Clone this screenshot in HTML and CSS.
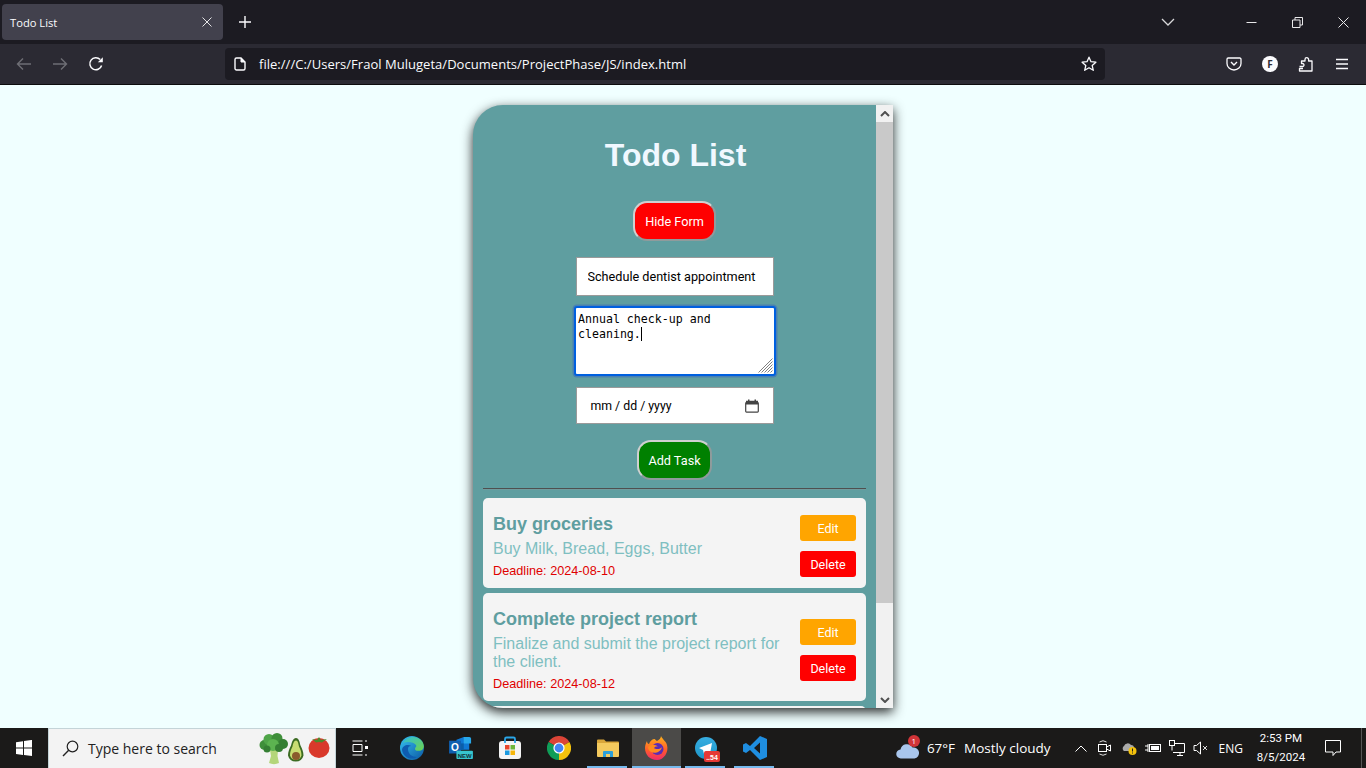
FILE: index.html
```html
<!DOCTYPE html>
<html lang="en">
<head>
  <meta charset="UTF-8">
  <meta name="viewport" content="width=device-width, initial-scale=1.0">
  <title>Todo List</title>
  <link rel="stylesheet" href="styles.css">
</head>
<body>
  <!-- browser tabs -->
  <div class="tabbar">
    <div class="tab">
      <span class="tab-title">Todo List</span>
      <svg class="tab-close" width="10" height="10" viewBox="0 0 10 10"><path d="M.5.5l9 9M9.500.5l-9 9" stroke="#e4e4e6" fill="none"/></svg>
    </div>
    <svg class="new-tab" width="14" height="14" viewBox="0 0 14 14"><path d="M7 1v12M1 7h12" stroke="#fbfbfe" stroke-width="1.400" fill="none"/></svg>
    <svg class="tab-list" width="14" height="8" viewBox="0 0 14 8"><path d="M1 1l6 6 6-6" stroke="#d8d8da" stroke-width="1.300" fill="none"/></svg>
    <div class="win-btn"><svg width="11" height="11" viewBox="0 0 11 11"><path d="M.5 5.500h10" stroke="#e8e8ea" fill="none"/></svg></div>
    <div class="win-btn"><svg width="11" height="11" viewBox="0 0 11 11"><path d="M.5 3h7.500v7.500H.5zM3 3V.5h7.500V8H8" stroke="#e8e8ea" fill="none"/></svg></div>
    <div class="win-btn"><svg width="11" height="11" viewBox="0 0 11 11"><path d="M.5.5l10 10M10.500.5l-10 10" stroke="#e8e8ea" fill="none"/></svg></div>
  </div>

  <!-- browser toolbar -->
  <div class="toolbar">
    <div class="tool-btn"><svg width="16" height="14" viewBox="0 0 16 14"><path d="M15 7H1.500M7 1.500L1.500 7 7 12.500" stroke="#6e6e75" stroke-width="1.400" fill="none"/></svg></div>
    <div class="tool-btn"><svg width="16" height="14" viewBox="0 0 16 14"><path d="M1 7h13.500M9 1.500L14.500 7 9 12.500" stroke="#6e6e75" stroke-width="1.400" fill="none"/></svg></div>
    <div class="tool-btn"><svg width="16" height="16" viewBox="0 0 16 16"><path d="M13.600 9.500A6 6 0 1 1 12.200 3.600" stroke="#fbfbfe" stroke-width="1.500" fill="none"/><path d="M14.800 1.200v5h-5z" fill="#fbfbfe"/></svg></div>
    <div class="urlbar">
      <svg width="12" height="14" viewBox="0 0 12 14"><path d="M1 2.500A1.500 1.500 0 0 1 2.500 1H7l4 4v6.500A1.500 1.500 0 0 1 9.500 13h-7A1.500 1.500 0 0 1 1 11.500z" stroke="#fbfbfe" stroke-width="1.400" fill="none"/><path d="M7 1v4h4" fill="#fbfbfe" stroke="#fbfbfe"/></svg>
      <span class="url-text">file:///C:/Users/Fraol Mulugeta/Documents/ProjectPhase/JS/index.html</span>
      <svg class="url-star" width="16" height="16" viewBox="0 0 16 16"><path d="M8 1.200l2 4.500 4.900.5-3.700 3.300 1.100 4.800L8 11.800l-4.300 2.500 1.100-4.800L1.100 6.200 6 5.700z" stroke="#fbfbfe" stroke-width="1.300" stroke-linejoin="round" fill="none"/></svg>
    </div>
    <div class="tool-btn"><svg width="16" height="14" viewBox="0 0 16 14"><path d="M1 2.200A1.200 1.200 0 0 1 2.200 1h11.600A1.200 1.200 0 0 1 15 2.200V6.500a7 6.500 0 0 1-14 0z" stroke="#fbfbfe" stroke-width="1.300" fill="none"/><path d="M5 5l3 3 3-3" stroke="#fbfbfe" stroke-width="1.400" fill="none"/></svg></div>
    <div class="tool-btn"><span class="avatar">F</span></div>
    <div class="tool-btn"><svg width="16" height="16" viewBox="0 0 16 16"><path d="M1.500 10.500h3a1.500 1.500 0 0 0 0-3h-1V5h3.500V3.500a1.800 1.800 0 0 1 3.600 0V5H14v10H1.500v-2.500H5" stroke="#fbfbfe" stroke-width="1.300" stroke-linejoin="round" fill="none"/></svg></div>
    <div class="tool-btn"><svg width="14" height="12" viewBox="0 0 14 12"><path d="M1 1.500h12M1 6h12M1 10.500h12" stroke="#fbfbfe" stroke-width="1.300" fill="none"/></svg></div>
  </div>

  <!-- the page itself -->
  <main class="page">
    <section class="panel">
      <div class="panel-body">
        <h1>Todo List</h1>
        <button class="pill-btn btn-hide" type="button">Hide Form</button>
        <input class="field field-title" type="text" value="Schedule dentist appointment">
        <div class="field-area">Annual check-up and cleaning.<span class="caret"></span>
          <svg class="grip" width="15" height="15" viewBox="0 0 15 15"><path d="M14.500.5L.5 14.500M14.500 3.500L3.500 14.500M14.500 6.500L6.500 14.500M14.500 9.500L9.500 14.500M14.500 12.500L12.500 14.500" stroke="#808080" fill="none"/></svg>
        </div>
        <div class="field field-date">
          <span>mm / dd / yyyy</span>
          <svg width="14" height="14" viewBox="0 0 14 14"><path d="M1.500 3.500h11a.8.8 0 0 1 .8.8v8a.8.8 0 0 1-.8.8h-11a.8.8 0 0 1-.8-.8v-8a.8.8 0 0 1 .8-.8z" fill="none" stroke="#444" stroke-width="1.200"/><path d="M1 1.800h12v3.700H1zM3 .5h1.500v2H3zM9.500.5H11v2H9.500z" fill="#444"/></svg>
        </div>
        <button class="pill-btn btn-add" type="button">Add Task</button>
        <hr class="divider">
        <ul class="task-list">
          <li class="task-item">
            <div class="task-text">
              <h3>Buy groceries</h3>
              <p class="task-desc">Buy Milk, Bread, Eggs, Butter</p>
              <p class="task-deadline">Deadline: 2024-08-10</p>
            </div>
            <div class="task-actions">
              <button class="task-btn btn-edit" type="button">Edit</button>
              <button class="task-btn btn-delete" type="button">Delete</button>
            </div>
          </li>
          <li class="task-item">
            <div class="task-text">
              <h3>Complete project report</h3>
              <p class="task-desc">Finalize and submit the project report for the client.</p>
              <p class="task-deadline">Deadline: 2024-08-12</p>
            </div>
            <div class="task-actions">
              <button class="task-btn btn-edit" type="button">Edit</button>
              <button class="task-btn btn-delete" type="button">Delete</button>
            </div>
          </li>
          <li class="task-item task-next"></li>
        </ul>
      </div>
      <div class="scrollbar">
        <div class="scroll-arrow"><svg width="10" height="6" viewBox="0 0 10 6"><path d="M1 5l4-4 4 4" stroke="#505050" stroke-width="2" fill="none"/></svg></div>
        <div class="scroll-thumb"></div>
        <div class="scroll-rest"></div>
        <div class="scroll-arrow"><svg width="10" height="6" viewBox="0 0 10 6"><path d="M1 1l4 4 4-4" stroke="#505050" stroke-width="2" fill="none"/></svg></div>
      </div>
    </section>
  </main>

  <!-- windows taskbar -->
  <footer class="taskbar">
    <div class="start"><svg width="16" height="16" viewBox="0 0 16 16"><path d="M0 2.200l7-1v6.400H0zM8 1l8-1.100v7.700H8zM0 8.500h7v6.400l-7-1zM8 8.500h8V16l-8-1.100z" fill="#fff"/></svg></div>
    <div class="search">
      <svg width="17" height="17" viewBox="0 0 17 17"><circle cx="10.500" cy="6.500" r="5.300" fill="none" stroke="#222" stroke-width="1.200"/><path d="M6.700 10.300L1 16" stroke="#222" stroke-width="1.400"/></svg>
      <span class="search-text">Type here to search</span>
      <svg class="search-art" width="72" height="32" viewBox="0 0 72 32">
        <path d="M11 17h8l-.5 6 1.500 7c-3 1.500-7 1.500-10 0l2-7z" fill="#b4d67a"/>
        <circle cx="5.500" cy="12" r="5" fill="#3f8f3a"/><circle cx="10" cy="6.500" r="5.500" fill="#4fa548"/><circle cx="18" cy="5.500" r="5.500" fill="#3f8f3a"/><circle cx="24" cy="11" r="5" fill="#357f33"/><circle cx="14" cy="12" r="6" fill="#5cb350"/><circle cx="20" cy="15" r="4" fill="#357f33"/><circle cx="8" cy="16" r="3.500" fill="#357f33"/>
        <path d="M37 5c3 0 3.500 4 4.500 7.500 1.500 3 3 6 3 10a8 8 0 0 1-15.500 0c0-4 1.500-7 3-10C33 9 34 5 37 5z" fill="#3c6b22"/>
        <path d="M37 7.500c2 0 2.500 3.500 3 6 1.500 3 2.500 5.500 2.500 9a6 6 0 0 1-11.500 0c0-3.500 1-6 2.500-9 .5-2.500 1.500-6 3.500-6z" fill="#c9dc72"/>
        <circle cx="37" cy="23" r="4" fill="#8a5a2c"/>
        <ellipse cx="60" cy="15" rx="10.500" ry="10" fill="#d9392b"/><path d="M53 6l5 1 2-3 2 3 6-1-5 3.500-3-.5-3 .5z" fill="#4d8a2c"/>
      </svg>
    </div>
    <div class="task-view"><svg width="16" height="16" viewBox="0 0 16 16"><path d="M.5 1h10M.5 15h10M1 4.500h9v7H1z" stroke="#fff" fill="none"/><path d="M13 1h2M13 15h2" stroke="#fff"/><rect x="13" y="6" width="3" height="3" fill="#fff"/></svg></div>

    <div class="apps">
      <div class="app">
        <svg width="24" height="24" viewBox="0 0 24 24"><defs><linearGradient id="edgeA" x1="0" y1="0" x2="1" y2="1"><stop offset="0" stop-color="#35c1f1"/><stop offset="1" stop-color="#0c59a4"/></linearGradient><linearGradient id="edgeB" x1="0" y1="0" x2="1" y2="1"><stop offset="0" stop-color="#2fbfd8"/><stop offset="1" stop-color="#6fd34a"/></linearGradient></defs><circle cx="12" cy="12" r="12" fill="url(#edgeA)"/><path d="M3 7C6 0 16-1 21 4c3 3 4 8 1 10-3 1.500-7 1-7-1 0-2 2-2 1-4-2-3-9-4-13-2z" fill="url(#edgeB)"/><path d="M8 13c0 5 4 8 9 8-6 4-14 0-15-7 0-3 3-5 6-5 2 0 3 1 3 1-2 0-3 1-3 3z" fill="#0e5cb0"/></svg>
      </div>
      <div class="app">
        <svg width="24" height="22" viewBox="0 0 26 24"><path d="M8 3l8-3h6v14H8z" fill="#0f78d4"/><path d="M16 0h6a2 2 0 0 1 2 2v5h-8z" fill="#28a8ea"/><path d="M8 7h8v7H8z" fill="#0a5ea8"/><rect x="0" y="4" width="13" height="14" fill="#0f5fb0"/><text class="app-letter" x="6.500" y="15">O</text><rect x="8" y="15" width="18" height="9" rx="1" fill="#37c6d0"/><text class="app-new" x="17" y="22.500">NEW</text></svg>
      </div>
      <div class="app">
        <svg width="24" height="24" viewBox="0 0 24 24"><rect x="1" y="5" width="22" height="18" rx="3" fill="#f4f4f4"/><path d="M7 7V3a1.500 1.500 0 0 1 1.500-1.500h7A1.500 1.500 0 0 1 17 3v4" stroke="#2aa6e8" stroke-width="1.800" fill="none"/><rect x="7" y="9" width="4.500" height="4.500" fill="#e8462a"/><rect x="12.500" y="9" width="4.500" height="4.500" fill="#6db63a"/><rect x="7" y="14.500" width="4.500" height="4.500" fill="#1b9ae0"/><rect x="12.500" y="14.500" width="4.500" height="4.500" fill="#f7b70b"/></svg>
      </div>
      <div class="app">
        <svg width="24" height="24" viewBox="0 0 24 24"><path d="M12 12L1.600 6A12 12 0 0 1 22.400 6z" fill="#db4437"/><path d="M12 12L22.400 6A12 12 0 0 1 12 24z" fill="#f4c20d"/><path d="M12 12L12 24A12 12 0 0 1 1.600 6z" fill="#0f9d58"/><circle cx="12" cy="12" r="5.600" fill="#fff"/><circle cx="12" cy="12" r="4.400" fill="#4285f4"/></svg>
      </div>
      <div class="app app-open">
        <svg width="22" height="20" viewBox="0 0 22 20"><path d="M0 2.500A1 1 0 0 1 1 1.500h6l2 2h12a1 1 0 0 1 1 1V6H0z" fill="#d9a63a"/><path d="M0 5h22v13a1 1 0 0 1-1 1H1a1 1 0 0 1-1-1z" fill="#f4ca5e"/><path d="M6 19v-5a1 1 0 0 1 1-1h8a1 1 0 0 1 1 1v5h-3v-3H9v3z" fill="#2d9fd8"/></svg>
      </div>
      <div class="app app-open app-active">
        <svg width="24" height="24" viewBox="0 0 24 24"><defs><linearGradient id="foxA" x1="0" y1="0" x2="0" y2="1"><stop offset="0" stop-color="#ffb31a"/><stop offset=".6" stop-color="#ff5a2c"/><stop offset="1" stop-color="#ee2b6c"/></linearGradient></defs><path d="M16 0c1 3 5 5 6 9 2 7-3 15-10 15S0 19 0 12c0-3 1-5 2-7 0 2 1 3 2 3 1-3 3-5 6-5 0 1 1 1 2 2 2-1 4-3 4-5z" fill="url(#foxA)"/><circle cx="12.500" cy="13" r="6" fill="#5b2bb5"/><path d="M3 11c3-3 8-3 10 0-2-1-3 0-4 1 2 2 7 1 8-1-1 5-7 7-11 5-2-1-3-3-3-5z" fill="#ff8a1f"/></svg>
      </div>
      <div class="app app-open">
        <svg class="app-overhang" width="22" height="22" viewBox="0 0 22 22"><defs><linearGradient id="tgA" x1="0" y1="0" x2="0" y2="1"><stop offset="0" stop-color="#37aee2"/><stop offset="1" stop-color="#1e96c8"/></linearGradient></defs><circle cx="11" cy="11" r="11" fill="url(#tgA)"/><path d="M4 11l13-5-2 11-4-3-2 3-1-4z" fill="#fff"/><rect x="9" y="14" width="16" height="11" rx="2" fill="#e53935"/><text class="app-badge" x="17" y="22.500">..54</text></svg>
      </div>
      <div class="app app-open">
        <svg width="24" height="24" viewBox="0 0 24 24"><path d="M17 0l7 3v18l-7 3-10-10-4 3-3-1.500V8.500L3 7l4 3zM17 6.500L11 12l6 5.500z" fill="#1f8ee0"/></svg>
      </div>
    </div>

    <div class="tray">
      <div class="weather">
        <span class="weather-icon"><svg width="24" height="17" viewBox="0 0 24 17"><path d="M5 16.500a4.500 4.500 0 0 1-.5-9 6.500 6.500 0 0 1 12-2 5.500 5.500 0 0 1 2 11z" fill="#a9c6ec"/></svg><span class="weather-badge">1</span></span>
        <span>67°F</span>
        <span>Mostly cloudy</span>
      </div>
      <svg class="tray-chevron" width="12" height="7" viewBox="0 0 12 7"><path d="M.5 6.500L6 1l5.500 5.500" stroke="#fff" fill="none"/></svg>
      <svg class="tray-icon" width="16" height="16" viewBox="0 0 16 16"><path d="M2.500 2a6 6 0 0 1 7 0M2.500 14a6 6 0 0 0 7 0" stroke="#ddd" fill="none"/><rect x="1.500" y="4.500" width="8" height="7" fill="none" stroke="#fff"/><path d="M9.500 7l4-2v6l-4-2" stroke="#fff" fill="none"/></svg>
      <svg class="tray-icon" width="16" height="16" viewBox="0 0 16 16"><path d="M3 11a3 3 0 0 1 0-5 4 4 0 0 1 7-1 3 3 0 0 1 3 3v3z" fill="#aaa"/><circle cx="11.500" cy="11" r="4" fill="#f4c20d"/><path d="M11.500 8.500v3M11.500 12.500v1" stroke="#222"/></svg>
      <svg class="tray-icon" width="16" height="16" viewBox="0 0 16 16"><rect x="4.500" y="4.500" width="11" height="7" fill="none" stroke="#fff"/><rect x="6" y="6" width="8" height="4" fill="#fff"/><path d="M0 6h3M0 10h3M3 4v8" stroke="#fff"/></svg>
      <svg class="tray-icon" width="16" height="16" viewBox="0 0 16 16"><path d="M4 3.500h11.500v9H4M8 15.500h6M11 12.500v3" stroke="#fff" fill="none"/><rect x=".5" y=".5" width="5" height="5" fill="#1a1a1a" stroke="#fff"/><path d="M3 5.500v5" stroke="#fff"/></svg>
      <svg class="tray-icon" width="16" height="16" viewBox="0 0 16 16"><path d="M1 5.500h2.500L7.500 2v12l-4-3.500H1z" stroke="#fff" fill="none"/><path d="M10 6l4 4M14 6l-4 4" stroke="#ddd" fill="none"/></svg>
      <span class="tray-lang">ENG</span>
      <div class="clock"><span>2:53 PM</span><span>8/5/2024</span></div>
      <div class="notify"><svg width="16" height="16" viewBox="0 0 16 16"><path d="M.5.5h15v11.500H11l-3 3.500v-3.500H.5z" stroke="#fff" fill="none"/></svg></div>
      <div class="show-desktop"></div>
    </div>
  </footer>
</body>
</html>
```

FILE: styles.css
```css
* {
  margin: 0;
  padding: 0;
  box-sizing: border-box;
}

html, body {
  height: 100%;
}

body {
  height: 768px;
  overflow: hidden;
  display: flex;
  flex-direction: column;
  background: #f0ffff;
  font-family: "Open Sans", "Noto Sans", sans-serif;
}

/* browser chrome */
.tabbar {
  height: 44px;
  background: #1c1b22;
  display: flex;
  align-items: center;
  flex-shrink: 0;
}

.tab {
  width: 221px;
  height: 36px;
  margin-left: 2px;
  padding: 0 11px 0 8px;
  background: #42414d;
  border-radius: 4px;
  display: flex;
  align-items: center;
  justify-content: space-between;
}

.tab-title {
  font-size: 11.200px;
  color: #fbfbfe;
}

.new-tab {
  margin-left: 15px;
}

.tab-list {
  margin-left: auto;
  margin-right: 53px;
}

.win-btn {
  width: 46px;
  height: 44px;
  display: flex;
  align-items: center;
  justify-content: center;
}

.toolbar {
  height: 41px;
  padding: 0 6px;
  background: #2b2a33;
  border-bottom: 1px solid #0c0c0d;
  display: flex;
  align-items: flex-start;
  flex-shrink: 0;
}

.tool-btn {
  width: 36px;
  height: 40px;
  display: flex;
  align-items: center;
  justify-content: center;
}

.urlbar {
  flex: 1;
  height: 32px;
  margin: 4px 111px 0;
  padding: 0 8px 0 9px;
  background: #1c1b22;
  border-radius: 4px;
  display: flex;
  align-items: center;
  color: #fbfbfe;
}

.url-text {
  margin-left: 13px;
  font-size: 13px;
  letter-spacing: 0.03px;
}

.url-star {
  margin-left: auto;
}

.avatar {
  width: 16px;
  height: 16px;
  border-radius: 50%;
  background: #fbfbfe;
  color: #2b2a33;
  font-size: 10px;
  font-weight: 700;
  display: flex;
  align-items: center;
  justify-content: center;
}

/* todo page */
.page {
  flex: 1;
  display: flex;
  justify-content: center;
  align-items: flex-start;
  padding-top: 20px;
  background: #f0ffff;
}

.panel {
  width: 420px;
  height: 603px;
  display: flex;
  background: #5f9ea0;
  border-radius: 30px 0 0 30px;
  box-shadow: 0 4px 12px rgba(0, 0, 0, 0.85);
  overflow: hidden;
}

.panel-body {
  flex: 1;
  min-width: 0;
  padding: 32px 10px 0;
  display: flex;
  flex-direction: column;
  align-items: center;
  overflow: hidden;
}

.panel-body > * {
  flex-shrink: 0;
}

h1 {
  font-family: "Liberation Sans", Arial, sans-serif;
  font-size: 32px;
  font-weight: 700;
  line-height: 37px;
  color: #f0f8ff;
  margin-bottom: 27px;
  margin-left: 2px;
}

.pill-btn {
  height: 40px;
  border: 2px solid;
  border-color: #d0d0d0 #8f9b9c #8f9b9c #d0d0d0;
  border-radius: 14px;
  color: #fff;
  font-family: Roboto, sans-serif;
  font-size: 12.700px;
  white-space: nowrap;
}

.btn-hide {
  width: 83px;
  background: #f00;
  margin-bottom: 16px;
}

.field {
  width: 198px;
  background: #fff;
  border: 1px solid #9a9a9a;
  color: #000;
  font-family: Roboto, sans-serif;
  font-size: 12.650px;
}

.field-title {
  height: 39px;
  padding: 0 11px;
  margin-bottom: 10px;
  outline: none;
}

.field-area {
  position: relative;
  width: 202px;
  height: 70px;
  margin-bottom: 11px;
  padding: 4px 2.500px;
  background: #fff;
  border: 2px solid #0060df;
  border-radius: 3px;
  box-shadow: 0 0 0 1.500px #4a80b0;
  font-family: "DejaVu Sans Mono", monospace;
  font-size: 11.600px;
  line-height: 15px;
  color: #000;
}

.caret {
  display: inline-block;
  width: 1px;
  height: 14px;
  background: #000;
  vertical-align: text-bottom;
}

.grip {
  position: absolute;
  right: 1px;
  bottom: 1px;
}

.field-date {
  height: 37px;
  padding: 0 14px;
  margin-bottom: 16px;
  font-size: 12.300px;
  display: flex;
  align-items: center;
  justify-content: space-between;
}

.btn-add {
  width: 75px;
  background: #008000;
  margin-bottom: 8px;
}

.divider {
  width: 383px;
  height: 2px;
  border: 0;
  border-top: 1px solid #4f4f4f;
  border-bottom: 1px solid #6f9c9e;
  margin-bottom: 8px;
}

.task-list {
  list-style: none;
  width: 383px;
  display: flex;
  flex-direction: column;
  gap: 5px;
}

.task-item {
  display: flex;
  align-items: center;
  gap: 10px;
  padding: 0 10px;
  background: #f4f4f4;
  border-radius: 5px;
  flex-shrink: 0;
}

.task-next {
  height: 60px;
}

.task-text {
  flex: 1;
  padding: 16px 0 9px;
  font-family: "Liberation Sans", Arial, sans-serif;
}

.task-text h3 {
  font-size: 18px;
  line-height: 21px;
  color: #5f9ea0;
  margin-bottom: 5px;
}

.task-desc {
  font-size: 16px;
  line-height: 18px;
  color: #7fbfc1;
  margin-bottom: 6px;
}

.task-deadline {
  font-size: 12.700px;
  line-height: 15px;
  color: #e00000;
}

.task-actions {
  padding-top: 6px;
  display: flex;
  flex-direction: column;
  gap: 10px;
  flex-shrink: 0;
}

.task-btn {
  width: 56px;
  height: 26px;
  border: 0;
  border-radius: 3px;
  color: #fff;
  font-family: Roboto, sans-serif;
  font-size: 12.500px;
}

.btn-edit {
  background: #ffa500;
}

.btn-delete {
  background: #f00;
}

/* drawn so it looks the same on every machine */
.scrollbar {
  width: 17px;
  flex-shrink: 0;
  display: flex;
  flex-direction: column;
  background: #f1f1f1;
}

.scroll-arrow {
  height: 17px;
  display: flex;
  align-items: center;
  justify-content: center;
  flex-shrink: 0;
}

.scroll-thumb {
  height: 481px;
  background: #c9c9c9;
}

.scroll-rest {
  flex: 1;
}

/* windows taskbar */
.taskbar {
  height: 40px;
  flex-shrink: 0;
  background: #1b1a19;
  display: flex;
  align-items: stretch;
  color: #fff;
}

.start {
  width: 48px;
  display: flex;
  align-items: center;
  justify-content: center;
}

.search {
  width: 288px;
  padding: 0 4px 0 13px;
  background: #f3f3f3;
  border: 1px solid #c4d4d8;
  border-bottom: 0;
  display: flex;
  align-items: center;
}

.search-text {
  margin-left: 9px;
  font-size: 14px;
  color: #222;
}

.search-art {
  margin-left: auto;
}

.task-view {
  width: 48px;
  display: flex;
  align-items: center;
  justify-content: center;
}

.apps {
  margin-left: 3px;
  display: flex;
}

.app {
  position: relative;
  width: 49px;
  display: flex;
  align-items: center;
  justify-content: center;
}

.app-open::after {
  content: "";
  position: absolute;
  left: 4px;
  right: 5px;
  bottom: 0;
  height: 2px;
  background: #76b9ed;
}

.app-active {
  background: #4b4a48;
}

.app-active::after {
  left: 0;
  right: 0;
}

.app-overhang {
  overflow: visible;
}

.app-letter {
  font: 700 11px "Liberation Sans", sans-serif;
  fill: #fff;
  text-anchor: middle;
}

.app-new {
  font: 700 6.500px "Liberation Sans", sans-serif;
  fill: #10323a;
  text-anchor: middle;
}

.app-badge {
  font: 700 7px "Liberation Sans", sans-serif;
  fill: #fff;
  text-anchor: middle;
}

.tray {
  margin-left: auto;
  display: flex;
  align-items: center;
  font-size: 13.500px;
}

.weather {
  display: flex;
  align-items: center;
  gap: 9px;
  margin-right: 24px;
}

.weather-icon {
  position: relative;
  display: flex;
  margin-top: 4px;
  margin-right: -2px;
}

.weather-badge {
  position: absolute;
  top: -7px;
  right: 0;
  width: 12px;
  height: 12px;
  border-radius: 50%;
  background: #d13438;
  font-size: 8px;
  line-height: 12px;
  text-align: center;
}

.tray-chevron {
  margin-right: 6px;
}

.tray-icon {
  margin: 0 4px;
}

.tray-lang {
  margin-left: 6px;
  font-size: 12px;
}

.clock {
  width: 62px;
  margin-left: 7px;
  display: flex;
  flex-direction: column;
  align-items: center;
  font-family: Roboto, sans-serif;
  font-size: 11.500px;
  line-height: 19px;
}

.notify {
  width: 42px;
  align-self: stretch;
  display: flex;
  align-items: center;
  justify-content: center;
}

.show-desktop {
  width: 5px;
  margin-left: 7px;
  align-self: stretch;
  border-left: 1px solid #555;
}
```
